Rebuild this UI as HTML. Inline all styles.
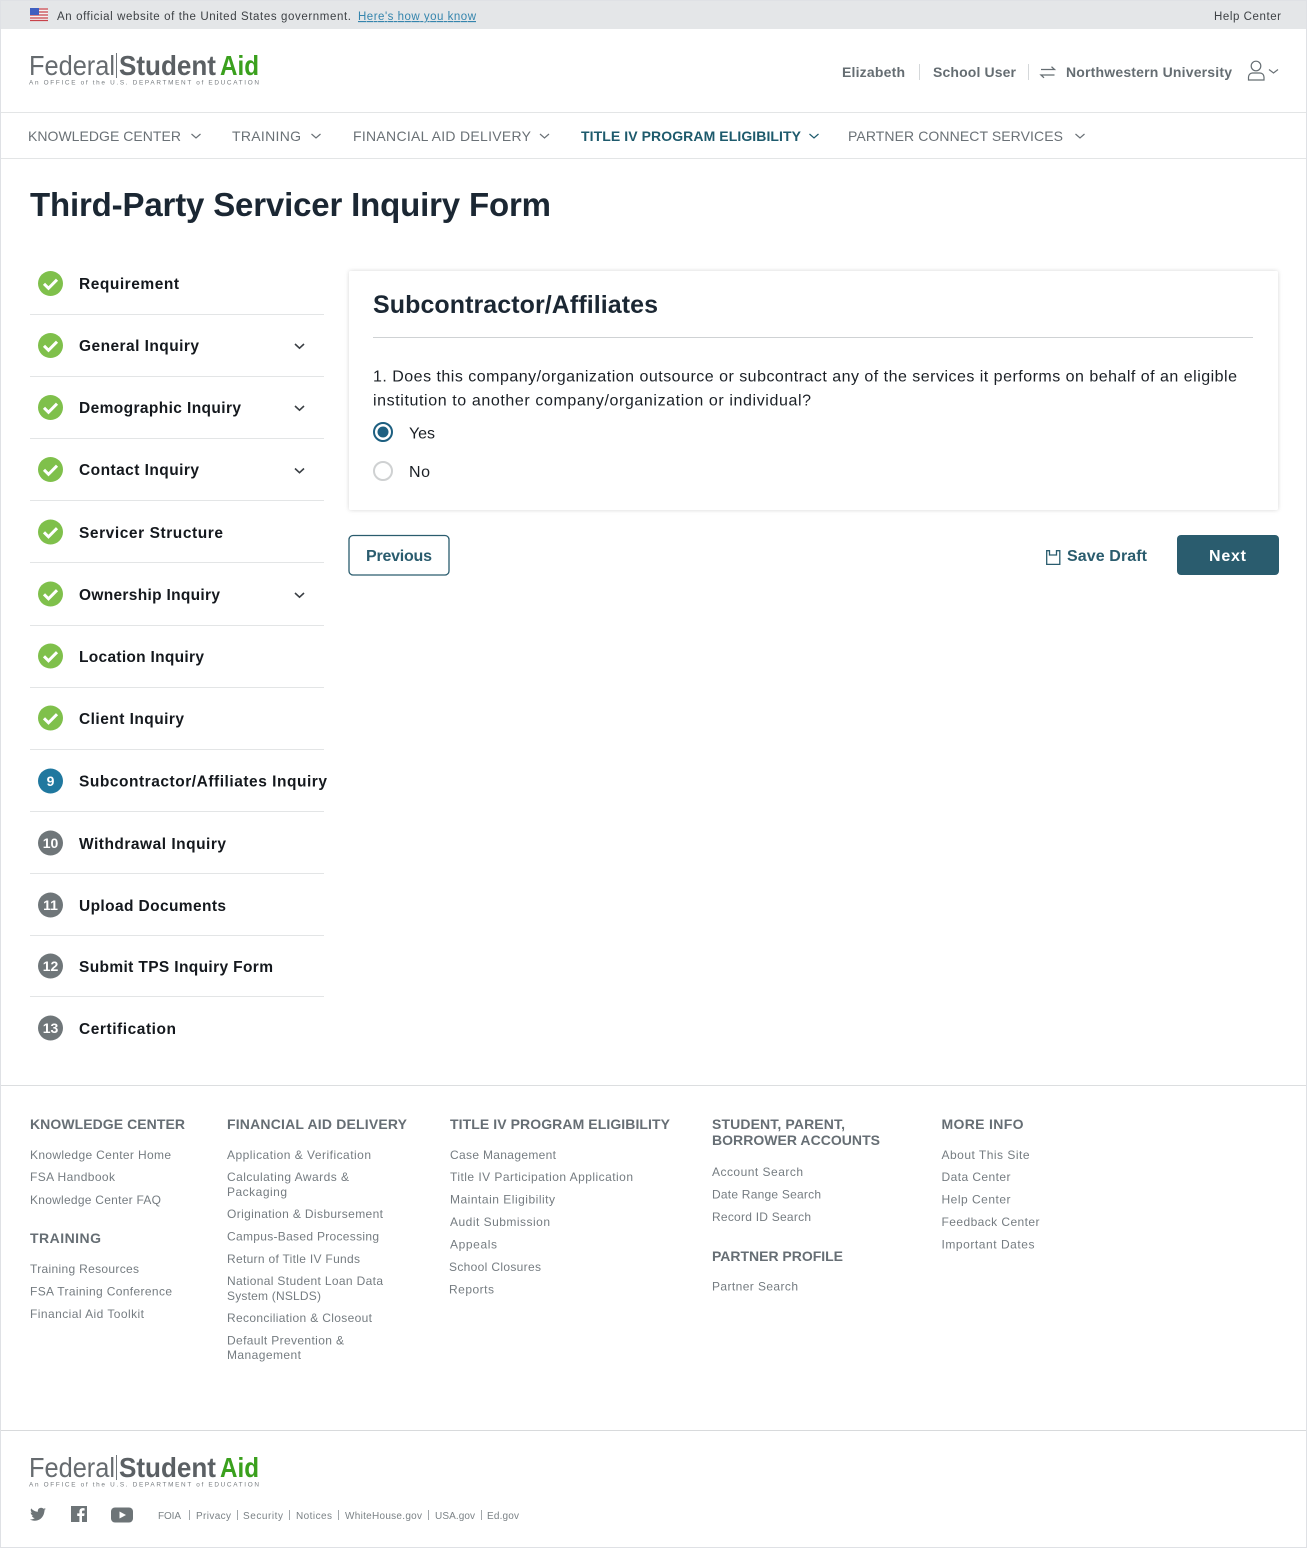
<!DOCTYPE html>
<html lang="en"><head><meta charset="utf-8"><title>Third-Party Servicer Inquiry Form</title>
<style>
html,body{margin:0;padding:0;background:#fff}
svg{display:block;filter:blur(.3px)}
text{font-family:"Liberation Sans",sans-serif;white-space:pre}
.b{font-weight:700}
.ban{font-size:11.5px;fill:#3d4145}
.hd{font-size:14px;font-weight:700;fill:#656d72}
.nav{font-size:14px;fill:#6a7176}
.side{font-size:15.5px;font-weight:700;fill:#14181d}
.q{font-size:16px;fill:#1b2026}
.fh{font-size:14px;font-weight:700;fill:#666e74}
.fl{font-size:12px;fill:#757c81}
.bl{font-size:10px;fill:#7b8286}
.chev{fill:none;stroke:#6a7176;stroke-width:1.2}
.sc{fill:none;stroke:#3a3f44;stroke-width:1.6}
.sep{stroke:#e3e5e6;stroke-width:1}
.n{font-size:14px;font-weight:700;fill:#fff;text-anchor:middle}
</style></head><body>
<svg width="1307" height="1548" viewBox="0 0 1307 1548" xmlns="http://www.w3.org/2000/svg">
<defs>
<filter id="sh" x="-2%" y="-5%" width="104%" height="110%"><feDropShadow dx="0" dy="0" stdDeviation="2.2" flood-color="#000" flood-opacity=".16"/></filter>
<g id="ok"><circle r="12.5" fill="#7fc04b"/><path d="M-6.5 0.3L-2 4.8L6.5-3.8" fill="none" stroke="#fff" stroke-width="3"/></g>
<path id="dn" class="sc" d="M-4.5-2L0 2.2L4.5-2"/>
<g id="logo">
<text x="0" y="22" font-size="28" fill="#666b6f" textLength="86" lengthAdjust="spacingAndGlyphs">Federal</text>
<rect x="87" y="0" width="1" height="25" fill="#70757a"/>
<text x="90" y="22" font-size="28" font-weight="700" fill="#5b6064" textLength="97" lengthAdjust="spacingAndGlyphs">Student</text>
<text x="191" y="22" font-size="28" font-weight="700" fill="#3aa01d" textLength="39" lengthAdjust="spacingAndGlyphs">Aid</text>
<text x="0" y="31.500" font-size="6.4" fill="#787d81" textLength="230">An OFFICE of the U.S. DEPARTMENT of EDUCATION</text>
</g>
</defs>
<rect width="1307" height="1548" fill="#fff"/>
<rect x="0" y="0" width="1307" height="1548" fill="none" stroke="#dfe1e5" stroke-width="2"/>
<rect x="1" y="1" width="1305" height="28" fill="#e4e6e8"/>

<rect x="30" y="8" width="18" height="13" fill="#f3f3f3"/>
<path d="M30 9h18M30 12h18M30 15h18M30 18h18M30 20.500h18" stroke="#c8424a" stroke-width="1.300"/>
<rect x="30" y="8" width="9" height="7" fill="#3f5fc0"/>
<text class="ban" x="57" y="20" textLength="294">An official website of the United States government.</text>
<text class="ban" x="358" y="20" textLength="118" style="fill:#3585ad" text-decoration="underline">Here's how you know</text>
<text class="ban" x="1214" y="20" textLength="67">Help Center</text>

<use href="#logo" x="29" y="53"/>
<text class="hd" x="842" y="77" textLength="63">Elizabeth</text>
<path class="sep" style="stroke:#d5d8da" d="M919.500 64v16M1028.500 64v16"/>
<text class="hd" x="933" y="77" textLength="83">School User</text>
<path d="M1041 69.500h13.500l-3-2.800M1054.500 75h-13.500l3 2.800" fill="none" stroke="#656d72" stroke-width="1.300"/>
<text class="hd" x="1066" y="77" textLength="166">Northwestern University</text>
<circle cx="1256" cy="66" r="4.800" fill="none" stroke="#656d72" stroke-width="1.200"/>
<path d="M1248.500 80v-3a4 4 0 0 1 4-4h7.500a4 4 0 0 1 4 4v3z" fill="none" stroke="#656d72" stroke-width="1.200"/>
<path class="chev" d="M1269 69.500l4.500 3.500 4.500-3.500"/>

<path class="sep" d="M1 112.500h1305M1 158.500h1305"/>
<text class="nav" x="28" y="141" textLength="153">KNOWLEDGE CENTER</text>
<path class="chev" d="M191.500 134l4.500 4 4.500-4"/>
<text class="nav" x="232" y="141" textLength="69">TRAINING</text>
<path class="chev" d="M311.500 134l4.500 4 4.500-4"/>
<text class="nav" x="353" y="141" textLength="178">FINANCIAL AID DELIVERY</text>
<path class="chev" d="M540 134l4.500 4 4.500-4"/>
<text class="nav b" x="581" y="141" textLength="220" style="fill:#1d5a6c">TITLE IV PROGRAM ELIGIBILITY</text>
<path class="chev" style="stroke:#1d5a6c" d="M809.500 134l4.500 4 4.500-4"/>
<text class="nav" x="848" y="141" textLength="215">PARTNER CONNECT SERVICES</text>
<path class="chev" d="M1075.500 134l4.500 4 4.500-4"/>

<text x="30" y="216" font-size="33" font-weight="700" fill="#1b2733" textLength="521">Third-Party Servicer Inquiry Form</text>

<path class="sep" d="M30 314.500h294M30 376.500h294M30 438.500h294M30 500.500h294M30 562.500h294M30 625.500h294M30 687.500h294M30 749.500h294M30 811.500h294M30 873.500h294M30 935.500h294M30 996.500h294"/>
<use href="#ok" x="50.500" y="283.500"/><text class="side" x="79" y="289" textLength="100">Requirement</text>
<use href="#ok" x="50.500" y="345.500"/><text class="side" x="79" y="351" textLength="120">General Inquiry</text><use href="#dn" x="299.500" y="346"/>
<use href="#ok" x="50.500" y="407.500"/><text class="side" x="79" y="413" textLength="162">Demographic Inquiry</text><use href="#dn" x="299.500" y="408"/>
<use href="#ok" x="50.500" y="469.500"/><text class="side" x="79" y="475" textLength="120">Contact Inquiry</text><use href="#dn" x="299.500" y="470.500"/>
<use href="#ok" x="50.500" y="532"/><text class="side" x="79" y="538" textLength="144">Servicer Structure</text>
<use href="#ok" x="50.500" y="594"/><text class="side" x="79" y="600" textLength="141">Ownership Inquiry</text><use href="#dn" x="299.500" y="595"/>
<use href="#ok" x="50.500" y="656"/><text class="side" x="79" y="662" textLength="125">Location Inquiry</text>
<use href="#ok" x="50.500" y="718"/><text class="side" x="79" y="724" textLength="105">Client Inquiry</text>
<circle cx="50.500" cy="781" r="12.500" fill="#20789f"/><text class="n" x="50.500" y="786">9</text><text class="side" x="79" y="786.500" textLength="248">Subcontractor/Affiliates Inquiry</text>
<circle cx="50.500" cy="843" r="12.500" fill="#6f7679"/><text class="n" x="50.500" y="848">10</text><text class="side" x="79" y="849" textLength="147">Withdrawal Inquiry</text>
<circle cx="50.500" cy="905" r="12.500" fill="#6f7679"/><text class="n" x="50.500" y="910">11</text><text class="side" x="79" y="911" textLength="147">Upload Documents</text>
<circle cx="50.500" cy="966" r="12.500" fill="#6f7679"/><text class="n" x="50.500" y="971">12</text><text class="side" x="79" y="972" textLength="194">Submit TPS Inquiry Form</text>
<circle cx="50.500" cy="1028" r="12.500" fill="#6f7679"/><text class="n" x="50.500" y="1033">13</text><text class="side" x="79" y="1034" textLength="97">Certification</text>

<rect x="349" y="271" width="929" height="239" rx="2" fill="#fff" filter="url(#sh)"/>
<text x="373" y="313" font-size="25" font-weight="700" fill="#1b2733" textLength="285">Subcontractor/Affiliates</text>
<path d="M373 337.500h880" stroke="#cfd2d4"/>
<text class="q" x="373" y="381.500" textLength="864">1. Does this company/organization outsource or subcontract any of the services it performs on behalf of an eligible</text>
<text class="q" x="373" y="405.500" textLength="438">institution to another company/organization or individual?</text>
<circle cx="383" cy="432" r="9" fill="#fff" stroke="#1d5f80" stroke-width="2"/><circle cx="383" cy="432" r="5.500" fill="#1d5f80"/>
<text class="q" x="409" y="438.500" textLength="26">Yes</text>
<circle cx="383" cy="471" r="9" fill="#fff" stroke="#cfd1d2" stroke-width="2"/>
<text class="q" x="409" y="477" textLength="21">No</text>

<rect x="349" y="535.500" width="100" height="39.500" rx="4" fill="#fff" stroke="#2a5c6e" stroke-width="1.300"/>
<text x="366" y="561" font-size="16" font-weight="700" fill="#2a5c6e" textLength="66">Previous</text>
<path d="M1046.700 564.400V550.700h2.800v4.300h7v-4.300h3.300v13.700z" fill="none" stroke="#2a5c6e" stroke-width="1.300"/>
<text x="1067" y="561" font-size="16" font-weight="700" fill="#2a5c6e" textLength="80">Save Draft</text>
<rect x="1177" y="535" width="102" height="40" rx="4" fill="#2a5c6e"/>
<text x="1209" y="561" font-size="16" font-weight="700" fill="#fff" textLength="37">Next</text>

<path d="M1 1085.500h1305" stroke="#dcdee0"/>
<text class="fh" x="30" y="1129" textLength="155">KNOWLEDGE CENTER</text>
<text class="fl" x="30" y="1159" textLength="141">Knowledge Center Home</text>
<text class="fl" x="30" y="1181" textLength="85">FSA Handbook</text>
<text class="fl" x="30" y="1204" textLength="131">Knowledge Center FAQ</text>
<text class="fh" x="30" y="1243" textLength="71">TRAINING</text>
<text class="fl" x="30" y="1273" textLength="109">Training Resources</text>
<text class="fl" x="30" y="1295.500" textLength="142">FSA Training Conference</text>
<text class="fl" x="30" y="1318" textLength="114">Financial Aid Toolkit</text>

<text class="fh" x="227" y="1129" textLength="180">FINANCIAL AID DELIVERY</text>
<text class="fl" x="227" y="1159" textLength="144">Application &amp; Verification</text>
<text class="fl" x="227" y="1181" textLength="122">Calculating Awards &amp;</text>
<text class="fl" x="227" y="1196" textLength="60">Packaging</text>
<text class="fl" x="227" y="1218" textLength="156">Origination &amp; Disbursement</text>
<text class="fl" x="227" y="1240.500" textLength="152">Campus-Based Processing</text>
<text class="fl" x="227" y="1263" textLength="133">Return of Title IV Funds</text>
<text class="fl" x="227" y="1285" textLength="156">National Student Loan Data</text>
<text class="fl" x="227" y="1300" textLength="94">System (NSLDS)</text>
<text class="fl" x="227" y="1322" textLength="145">Reconciliation &amp; Closeout</text>
<text class="fl" x="227" y="1344.500" textLength="117">Default Prevention &amp;</text>
<text class="fl" x="227" y="1359" textLength="74">Management</text>

<text class="fh" x="450" y="1129" textLength="220">TITLE IV PROGRAM ELIGIBILITY</text>
<text class="fl" x="450" y="1159" textLength="106">Case Management</text>
<text class="fl" x="450" y="1181" textLength="183">Title IV Participation Application</text>
<text class="fl" x="450" y="1203.500" textLength="105">Maintain Eligibility</text>
<text class="fl" x="450" y="1226" textLength="100">Audit Submission</text>
<text class="fl" x="450" y="1248.500" textLength="47">Appeals</text>
<text class="fl" x="449" y="1271" textLength="92">School Closures</text>
<text class="fl" x="449" y="1293.500" textLength="45">Reports</text>

<text class="fh" x="712" y="1129" textLength="133">STUDENT, PARENT,</text>
<text class="fh" x="712" y="1145" textLength="168">BORROWER ACCOUNTS</text>
<text class="fl" x="712" y="1176" textLength="91">Account Search</text>
<text class="fl" x="712" y="1198.500" textLength="109">Date Range Search</text>
<text class="fl" x="712" y="1221" textLength="99">Record ID Search</text>
<text class="fh" x="712" y="1261" textLength="131">PARTNER PROFILE</text>
<text class="fl" x="712" y="1290.500" textLength="86">Partner Search</text>

<text class="fh" x="941.500" y="1129" textLength="82">MORE INFO</text>
<text class="fl" x="941.500" y="1159" textLength="88">About This Site</text>
<text class="fl" x="941.500" y="1181" textLength="69">Data Center</text>
<text class="fl" x="941.500" y="1203.500" textLength="69">Help Center</text>
<text class="fl" x="941.500" y="1226" textLength="98">Feedback Center</text>
<text class="fl" x="941.500" y="1248.500" textLength="93">Important Dates</text>

<path d="M1 1430.500h1305" stroke="#d8dadc"/>
<use href="#logo" x="29" y="1455"/>
<path d="M46 1510.300c-.6.300-1.200.4-1.900.5.700-.4 1.200-1 1.400-1.800-.6.400-1.300.6-2 .8a3.300 3.300 0 0 0-5.600 3c-2.700-.1-5.100-1.400-6.700-3.400-.9 1.500-.4 3.400 1 4.400-.5 0-1-.2-1.500-.4 0 1.600 1.100 2.900 2.600 3.300-.5.100-1 .1-1.500 0 .4 1.300 1.600 2.200 3 2.300-1.400 1.100-3.200 1.600-4.900 1.400 4.600 3 12.900 1.200 14.400-7.300.1-.6.200-1.100.2-1.700.6-.4 1.100-1 1.500-1.600z" fill="#6d7477" transform="translate(0,-1)"/>
<path d="M71 1506h16v16h-5v-6h2.200l.4-2.600H82v-1.600c0-.8.300-1.300 1.300-1.300h1.300v-2.300c-.3 0-1-.1-1.900-.1-2 0-3.300 1.200-3.300 3.400v1.900h-2.200v2.600h2.200v6H71z" fill="#6d7477"/>
<rect x="111" y="1507.500" width="22" height="15" rx="4" fill="#6d7477"/><path d="M119.500 1511.500l6.500 3.500-6.500 3.500z" fill="#fff"/>
<text class="bl" x="158" y="1519" textLength="23">FOIA</text>
<path d="M189.500 1510v10M237.500 1510v10M289.500 1510v10M338.500 1510v10M428.500 1510v10M481.500 1510v10" stroke="#8c9295" stroke-width=".8"/>
<text class="bl" x="196" y="1519" textLength="35">Privacy</text>
<text class="bl" x="243" y="1519" textLength="40">Security</text>
<text class="bl" x="296" y="1519" textLength="36">Notices</text>
<text class="bl" x="345" y="1519" textLength="77">WhiteHouse.gov</text>
<text class="bl" x="435" y="1519" textLength="40">USA.gov</text>
<text class="bl" x="487" y="1519" textLength="32">Ed.gov</text>
</svg>
</body></html>
